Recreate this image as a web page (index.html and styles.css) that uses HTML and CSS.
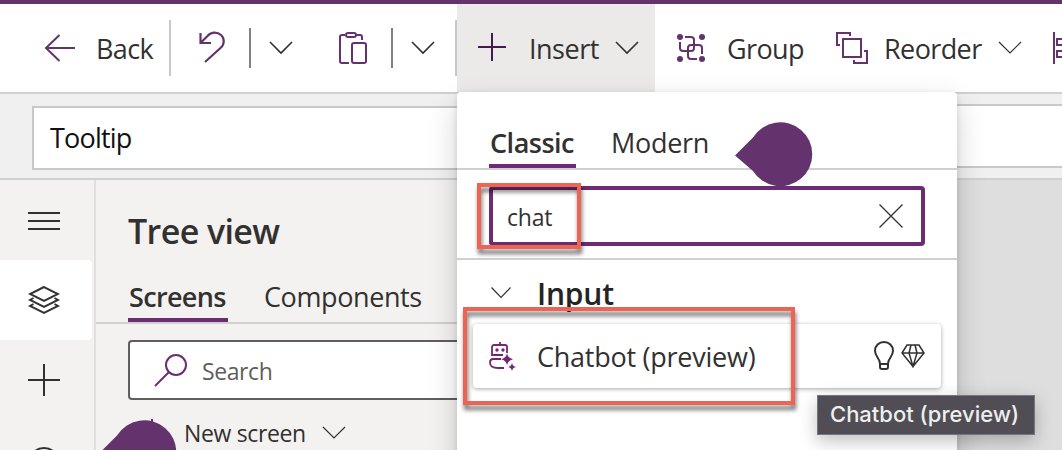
FILE: index.html
```html
<!DOCTYPE html>
<html lang="en">
<head>
<meta charset="utf-8">
<title>Insert control</title>
<link rel="stylesheet" href="styles.css">
</head>
<body>
<div class="app">
  <header class="toolbar">
    <svg class="icon back-icon" width="32" height="32" viewBox="0 0 32 32"><path d="M31 16H2M15.500 3L2 16l13.500 13"/></svg>
    <span class="label back-label">Back</span>
    <i class="rule tall"></i>
    <svg class="icon undo-icon" width="30" height="34" viewBox="0 0 30 34"><path d="M2.500 2v10h10.500M3 11.500L9.500 5c4-4.500 10-4 13.500-1s4 9-.5 13L7 31"/></svg>
    <i class="rule dark undo-rule"></i>
    <svg class="icon chev undo-chev" width="24" height="14" viewBox="0 0 24 14"><path d="M1 1l11 11L23 1"/></svg>
    <svg class="icon paste-icon" width="30" height="34" viewBox="0 0 30 34"><path d="M7 4H4a2 2 0 0 0-2 2v24a2 2 0 0 0 2 2h7M18 4h4a2 2 0 0 1 2 2v3"/><rect x="8" y="2" width="10" height="4" rx="2"/><rect x="14" y="12" width="14" height="20" rx="2"/></svg>
    <i class="rule dark paste-rule"></i>
    <svg class="icon chev paste-chev" width="24" height="14" viewBox="0 0 24 14"><path d="M1 1l11 11L23 1"/></svg>
    <i class="rule tall end-rule"></i>
    <div class="insert">
      <svg class="icon plus-icon" width="28" height="30" viewBox="0 0 28 30"><path d="M0 15h28M14 1v28"/></svg>
      <span class="label insert-label">Insert</span>
      <svg class="icon chev" width="24" height="14" viewBox="0 0 24 14"><path d="M1 1l11 11L23 1"/></svg>
    </div>
    <svg class="icon group-icon" width="30" height="30" viewBox="0 0 30 30"><g class="dots"><circle cx="4" cy="4" r="3"/><circle cx="26" cy="4" r="3"/><circle cx="4" cy="26" r="3"/><circle cx="26" cy="26" r="3"/></g><path d="M9 4h6a3 3 0 0 1 3 3v8a3 3 0 0 1-3 3H7a3 3 0 0 1-3-3V9M21 26h-6a3 3 0 0 1-3-3v-8a3 3 0 0 1 3-3h8a3 3 0 0 1 3 3v6"/></svg>
    <span class="label group-label">Group</span>
    <svg class="icon reorder-icon" width="34" height="34" viewBox="0 0 34 34"><path d="M5 14H2V2h13v3M8 8h18v18H8zM29 20h3v12H19v-3"/></svg>
    <span class="label reorder-label">Reorder</span>
    <svg class="icon chev thin" width="24" height="14" viewBox="0 0 24 14"><path d="M1 1l11 11L23 1"/></svg>
    <svg class="icon align-icon" width="10" height="34" viewBox="0 0 10 34"><path d="M2 1v32M10 8H5v6h5M10 20H5v6h5"/></svg>
  </header>

  <div class="formula-bar">
    <div class="property">Tooltip</div>
    <div class="formula"></div>
  </div>

  <div class="body">
    <nav class="rail">
      <div class="rail-item menu-item"><svg width="32" height="20" viewBox="0 0 32 20"><path d="M0 2h32M0 10h32M0 18h32"/></svg></div>
      <div class="rail-item active"><svg width="32" height="30" viewBox="0 0 32 30"><path d="M16 2L2 9l14 7 14-7zM5.500 13L2 15l14 7 14-7-3.500-2M5.500 19L2 21l14 7 14-7-3.500-2"/></svg></div>
      <div class="rail-item"><svg width="32" height="32" viewBox="0 0 32 32"><path d="M0 16h32M16 0v32"/></svg></div>
      <div class="rail-item data-item"><svg width="32" height="32" viewBox="0 0 32 32"><circle cx="16" cy="16" r="15"/></svg></div>
    </nav>
    <section class="tree">
      <h1>Tree view</h1>
      <div class="tree-tabs"><span class="tab selected screens">Screens</span><span class="tab components">Components</span></div>
      <div class="search"><svg width="34" height="34" viewBox="0 0 34 34"><circle cx="22" cy="12" r="10"/><path d="M15 19L1 33"/></svg><span>Search</span></div>
      <div class="new-screen"><svg class="new-plus" width="24" height="32" viewBox="0 0 24 32"><path d="M12 0v28M0 15h24"/></svg><span>New screen</span><svg class="chev thin" width="24" height="14" viewBox="0 0 24 14"><path d="M1 1l11 11L23 1"/></svg></div>
    </section>
    <main class="canvas"></main>
  </div>

  <div class="menu">
    <div class="menu-tabs"><span class="tab selected classic">Classic</span><span class="tab modern">Modern</span></div>
    <div class="menu-search"><div class="input"><span>chat</span><svg width="24" height="24" viewBox="0 0 24 24"><path d="M.5.500l23 23M23.500.500l-23 23"/></svg></div></div>
    <div class="category"><svg width="20" height="12" viewBox="0 0 20 12"><path d="M.5.500L10 10.500l9.500-10"/></svg><span>Input</span></div>
    <div class="result">
      <svg class="bot" width="28" height="32" viewBox="0 0 28 32"><path d="M12 2v3M6 5h11a2 2 0 0 1 2 2v6M12 15H4V7a2 2 0 0 1 2-2M4 15h11M13 19H5q-3 0-3 3.500Q2 28 10 28h6"/><circle class="fill" cx="9" cy="10" r="1.700"/><circle class="fill" cx="15" cy="10" r="1.700"/><path class="fill" d="M19 13.500q1 4.800 6 5.800-5 1-6 5.800-1-4.800-6-5.800 5-1 6-5.800z"/><path class="fill" d="M24 23q.7 3.300 4 4-3.300.7-4 4-.7-3.300-4-4 3.300-.7 4-4z"/></svg>
      <span>Chatbot (preview)</span>
      <svg class="bulb" width="20" height="30" viewBox="0 0 20 30"><path d="M6 23C6 17 1 16 1 9.500a9 8.500 0 0 1 18 0C19 16 14 17 14 23zM6 23v3q0 2 2 2h4q2 0 2-2v-3"/></svg>
      <svg class="gem" width="24" height="24" viewBox="0 0 24 24"><path d="M6 1h12l5 8-11 13.500L1 9zM1 9h22M10 1L8 9l4 13.500L16 9l-2-8"/></svg>
    </div>
  </div>

  <svg class="drop menu-drop" width="80" height="66" viewBox="0 0 80 66"><path d="M2 35.500L20 17.500A32 32 0 1 1 20 51z"/></svg>
  <svg class="drop tree-drop" width="80" height="66" viewBox="0 0 80 66"><path d="M2 35.500L20 17.500A32 32 0 1 1 20 51z"/></svg>
  <div class="mark mark-search"></div>
  <div class="mark mark-result"></div>
  <div class="tip">Chatbot (preview)</div>
</div>
</body>
</html>
```

FILE: styles.css
```css
* { box-sizing: border-box; }
body { margin: 0; overflow: hidden; }
.app { position: relative; width: 1062px; height: 450px; overflow: hidden; border-top: 4px solid #64336e; background: #fff; color: #323130; font: 27px/36px "Open Sans", "Noto Sans", sans-serif; letter-spacing: -.6px; display: flex; flex-direction: column; }
svg { display: block; flex: none; fill: none; stroke: #323130; stroke-width: 2; }
span { white-space: nowrap; }

.toolbar { height: 90px; flex: none; display: flex; align-items: center; border-bottom: 2px solid #d0d0d0; }
.icon { stroke: #64336e; }
.toolbar .chev, .chev { stroke: #323130; stroke-width: 1.6; }
.toolbar .thin, .thin { stroke-width: 1.2; }
.rule { flex: none; width: 2px; height: 40px; background: #828282; }
.tall { height: 56px; background: #c8c8c8; }
.label { flex: none; padding-top: 2px; }
.back-icon { margin-left: 44px; }
.back-label { width: 73px; margin-left: 20px; }
.undo-icon { margin-left: 27px; stroke-width: 2.2; }
.undo-rule { margin-left: 21px; }
.undo-chev { margin-left: 18px; }
.paste-icon { margin-left: 45px; }
.paste-rule { margin-left: 23px; }
.paste-chev { margin-left: 18px; }
.end-rule { margin-left: 20px; }
.insert { width: 198px; height: 88px; flex: none; display: flex; align-items: center; background: #ebeae9; }
.plus-icon { margin: -2px 23px 0 21px; stroke: #421c50; }
.insert-label { width: 86px; letter-spacing: -.5px; }
.group-icon { margin-left: 21px; }
.dots, .fill { fill: #64336e; stroke: none; }
.group-label { margin-left: 21px; width: 108px; }
.reorder-icon { width: 34px; }
.reorder-label { margin-left: 15px; width: 114px; }
.align-icon { margin-left: 30px; }

.formula-bar { height: 86px; flex: none; display: flex; padding: 12px 0 0 32px; background: #f0f0f0; border-bottom: 2px solid #d0d0d0; }
.property { width: 500px; height: 64px; padding: 12px 16px; background: #fff; border: 2px solid #c8c8c8; color: #111; letter-spacing: -.8px; }
.formula { flex: 1; height: 64px; margin-top: -2px; background: #fff; border: solid #c8c8c8; border-width: 2px 0; }

.body { flex: 1; display: flex; min-height: 0; }
.rail { width: 96px; flex: none; background: #f3f2f1; border-right: 2px solid #e1dfdd; }
.rail-item { width: 92px; height: 80px; display: flex; align-items: center; justify-content: center; padding-right: 4px; }
.menu-item { padding-top: 2px; }
.active { background: #fff; border-radius: 0 4px 4px 0; }
.data-item { padding-top: 6px; }
.tree { width: 480px; flex: none; background: #f3f2f1; }
.tree h1 { margin: 0; height: 90px; padding: 28px 0 0 32px; font-size: 34px; line-height: 46px; font-weight: 600; }
.tree-tabs { height: 54px; display: flex; padding-left: 32px; border-bottom: 2px solid #d0d0d0; }
.tab { height: 52px; padding-top: 9px; }
.selected { font-weight: 600; border-bottom: 4px solid #6b2c74; }
.screens { width: 100px; padding-left: 1px; letter-spacing: -.65px; }
.components { margin-left: 36px; letter-spacing: -.4px; }
.search { height: 60px; margin: 16px 0 0 32px; padding-left: 24px; display: flex; align-items: center; border: 2px solid #605e5c; border-radius: 4px; background: #fff; color: #605e5c; font-size: 23px; }
.search svg { stroke: #6b2c74; margin-top: -1px; }
.search span { margin-left: 14px; padding-top: 2px; letter-spacing: -.4px; }
.new-screen { display: flex; align-items: center; padding: 15px 0 0 44px; font-size: 23px; letter-spacing: -.35px; }
.new-plus { stroke: #6b2c74; margin-top: 3px; }
.new-screen span { margin-left: 20px; width: 138px; }
.new-screen .chev { margin-top: -1px; }
.canvas { flex: 1; background: #dedede; }

.menu { position: absolute; left: 457px; top: 88px; width: 500px; height: 380px; border-radius: 4px 4px 0 0; background: #fff; box-shadow: 0 12px 30px rgba(0,0,0,.18), 0 2px 6px rgba(0,0,0,.12); }
.menu-tabs { height: 78px; display: flex; padding: 24px 0 0 32px; border-bottom: 2px solid #d0d0d0; }
.classic { width: 87px; padding-left: 1px; letter-spacing: -.5px; }
.modern { margin-left: 35px; letter-spacing: -.3px; }
.menu-search { height: 90px; padding: 16px 32px 0; border-bottom: 2px solid #d0d0d0; }
.input { width: 436px; height: 60px; display: flex; align-items: center; justify-content: space-between; border: 4px solid #6b2c74; border-radius: 4px; padding: 0 18px 0 14px; font-size: 23px; letter-spacing: -.2px; }
.input span { padding-top: 2px; }
.input svg { stroke-width: 1.3; }
.category { height: 64px; display: flex; align-items: center; padding: 4px 0 0 34px; font-size: 30px; font-weight: 600; color: #242424; letter-spacing: -.2px; }
.category svg { stroke-width: 1.2; margin-top: -3px; }
.category span { margin-left: 26px; }
.result { height: 64px; margin: 0 16px; display: flex; align-items: center; padding-left: 15px; border-radius: 4px; box-shadow: 0 1px 4px rgba(0,0,0,.35); }
.result .bot { stroke: #742774; stroke-width: 1.8; }
.bot .fill { fill: #742774; }
.result span { width: 337px; margin-left: 21px; padding-top: 2px; letter-spacing: -.25px; }
.bulb { margin-right: 7px; margin-top: -1px; }
.gem { stroke-width: 1.5; }

.drop { position: absolute; stroke: none; fill: #64336e; }
.menu-drop { left: 732.5px; top: 115.5px; }
.tree-drop { left: 96.5px; top: 414px; }
.mark { position: absolute; border: 4px solid #ee6352; filter: drop-shadow(1px 5px 2px rgba(0,0,0,.55)); }
.mark-search { left: 477px; top: 179px; width: 104px; height: 66px; }
.mark-result { left: 463px; top: 303px; width: 332px; height: 98px; }
.tip { position: absolute; left: 817px; top: 391px; width: 218px; height: 40px; padding-left: 12px; border: 1px solid #77767a; background: #504e54; color: #eee; font: 500 22px/37px Inter, sans-serif; letter-spacing: 0; white-space: nowrap; box-shadow: 0 6px 18px rgba(0,0,0,.25); }
```
